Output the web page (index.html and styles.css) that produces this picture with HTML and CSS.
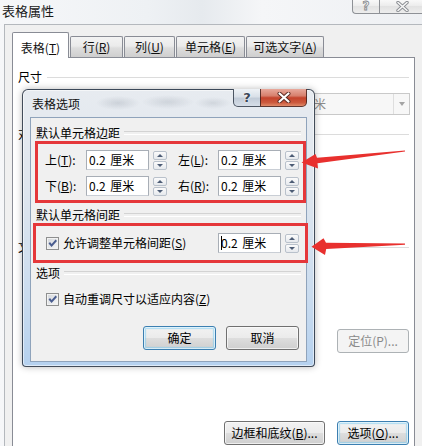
FILE: index.html
```html
<!DOCTYPE html>
<html lang="zh-CN">
<head>
<meta charset="utf-8">
<title>表格属性</title>
<link rel="stylesheet" href="styles.css">
</head>
<body>
<div class="window">
  <div class="titlebar">
    <span class="title">表格属性</span>
    <div class="caption">
      <span class="cap-btn cap-help">?</span>
      <span class="cap-btn cap-close">
        <svg width="13" height="11" viewBox="0 0 13 11"><path d="M2 1.5 L11 9.5 M11 1.5 L2 9.5" stroke="#8a8d92" stroke-width="3.4" stroke-linecap="round"/><path d="M2 1.5 L11 9.5 M11 1.5 L2 9.5" stroke="#f7f7f7" stroke-width="1.6" stroke-linecap="round"/></svg>
      </span>
    </div>
  </div>
  <div class="client">
    <div class="tabs">
      <div class="tab active">表格(<u>T</u>)</div>
      <div class="tab t-row">行(<u>R</u>)</div>
      <div class="tab t-col">列(<u>U</u>)</div>
      <div class="tab t-cell">单元格(<u>E</u>)</div>
      <div class="tab t-alt">可选文字(<u>A</u>)</div>
    </div>
    <div class="panel">
      <div class="group-h g-size"><span>尺寸</span></div>
      <div class="size-row">
        <div class="combo"><span class="combo-text">厘米</span><span class="combo-arrow"></span></div>
      </div>
      <div class="group-h g-align"><span>对</span></div>
      <div class="group-h g-wrap"><span>文</span></div>
      <div class="pos-row"><span class="btn disabled w72">定位(P)...</span></div>
      <div class="bottom-row">
        <span class="btn w101">边框和底纹(<u>B</u>)...</span>
        <span class="btn default w72">选项(<u>O</u>)...</span>
      </div>
    </div>
  </div>

  <div class="dialog">
    <div class="dlg-titlebar">
      <span class="dlg-title">表格选项</span>
      <div class="dlg-caption">
        <span class="dcap dcap-help">?</span>
        <span class="dcap dcap-close">
          <svg width="14" height="11" viewBox="0 0 14 11"><path d="M2.5 1.5 L11.5 9.5 M11.5 1.5 L2.5 9.5" stroke="#5a2a22" stroke-width="4" stroke-linecap="round"/><path d="M2.5 1.5 L11.5 9.5 M11.5 1.5 L2.5 9.5" stroke="#ffffff" stroke-width="2.2" stroke-linecap="round"/></svg>
        </span>
      </div>
    </div>
    <div class="dlg-client">
      <div class="group-h dg dg1"><span>默认单元格边距</span></div>
      <div class="mark mark-margins">
        <div class="m-row">
          <span class="lbl lbl-a">上(<u>T</u>):</span>
          <span class="field">0.2 厘米</span>
          <span class="spin"><span class="sp up"></span><span class="sp down"></span></span>
          <span class="lbl lbl-b">左(<u>L</u>):</span>
          <span class="field">0.2 厘米</span>
          <span class="spin"><span class="sp up"></span><span class="sp down"></span></span>
        </div>
        <div class="m-row">
          <span class="lbl lbl-a">下(<u>B</u>):</span>
          <span class="field">0.2 厘米</span>
          <span class="spin"><span class="sp up"></span><span class="sp down"></span></span>
          <span class="lbl lbl-b">右(<u>R</u>):</span>
          <span class="field">0.2 厘米</span>
          <span class="spin"><span class="sp up"></span><span class="sp down"></span></span>
        </div>
      </div>
      <div class="group-h dg dg2"><span>默认单元格间距</span></div>
      <div class="mark mark-spacing">
        <span class="check"><svg width="11" height="11" viewBox="0 0 11 11"><path d="M1.5 5.5 L3 4 L4.6 6 L8.6 1.6 L10 3 L4.6 9 Z" fill="#4a5d8f"/></svg></span>
        <span class="check-text">允许调整单元格间距(<u>S</u>)</span>
        <span class="field field-auto"><span class="caret"></span>0.2 厘米</span>
        <span class="spin"><span class="sp up"></span><span class="sp down"></span></span>
      </div>
      <div class="group-h dg dg3"><span>选项</span></div>
      <div class="auto-row">
        <span class="check"><svg width="11" height="11" viewBox="0 0 11 11"><path d="M1.5 5.5 L3 4 L4.6 6 L8.6 1.6 L10 3 L4.6 9 Z" fill="#4a5d8f"/></svg></span>
        <span class="check-text">自动重调尺寸以适应内容(<u>Z</u>)</span>
      </div>
      <div class="btn-row">
        <span class="btn default w73">确定</span>
        <span class="btn w73">取消</span>
      </div>
    </div>
  </div>

  <svg class="arrows" width="422" height="446" viewBox="0 0 422 446">
    <polygon points="405,150.4 317,157.8 315.5,154 301.5,162.5 318,168.5 317.5,163.2 405,151.6" fill="#e8302e"/>
    <polygon points="405,243.6 326,242.8 323.5,238.3 311.5,246.8 325,255 326.2,249 405,244.8" fill="#e8302e"/>
  </svg>
</div>
</body>
</html>
```

FILE: styles.css
```css
* { box-sizing: border-box; }
html, body { margin: 0; padding: 0; }
body {
  width: 422px;
  height: 446px;
  overflow: hidden;
  font-family: "Noto Sans CJK SC", "Microsoft YaHei", sans-serif;
  font-size: 12px;
  color: #000;
  background: #eef1f5;
}
u { text-decoration: underline; text-underline-offset: 1px; }

.window {
  position: relative;
  width: 422px;
  height: 446px;
  overflow: hidden;
  background: linear-gradient(90deg, #f6f7f9 0%, #eef1f4 35%, #e6eaee 48%, #f5f6f8 62%, #eef0f3 100%);
}

/* outer title bar */
.titlebar { height: 24px; display: flex; align-items: flex-start; }
.title { margin-left: 2px; font-size: 13px; line-height: 22px; color: #1a1a1a; }
.caption { margin-left: auto; margin-top: -1px; display: flex; margin-right: -3px; }
.cap-btn {
  height: 15px;
  display: flex; align-items: center; justify-content: center;
  border: 1px solid #8e9196; border-top: none;
  background: linear-gradient(#fbfbfb, #ececec 50%, #e2e2e2 51%, #ededed);
}
.cap-help {
  width: 27px; border-right: none; border-bottom-left-radius: 4px;
  font-family: "DejaVu Sans", sans-serif; font-weight: bold; font-size: 12px; line-height: 14px;
  color: #f4f4f4; -webkit-text-stroke: 0.8px #85888c;
}
.cap-close { width: 46px; }

/* outer client */
.client {
  margin-left: 4px;
  height: 422px;
  border-top: 1px solid #b4b8bd;
  border-left: 1px solid #b4b8bd;
  background: #f0f0f0;
  padding: 7px 0 0 7px;
}
.tabs { display: flex; align-items: flex-end; height: 25px; position: relative; z-index: 1; }
.tab {
  height: 21px;
  margin-left: 1px;
  border: 1px solid #898c95; border-bottom: none;
  border-radius: 2px 2px 0 0;
  background: linear-gradient(#f3f3f3, #ebebeb 45%, #dddddd 55%, #cfcfcf);
  text-align: center; line-height: 16px; padding-top: 2px;
  color: #111;
}
.tab.active {
  margin-left: 0;
  width: 57px; height: 26px; margin-bottom: -1px;
  background: #fff; padding-top: 7px;
}
.t-row { width: 53px; }
.t-col { width: 51px; }
.t-cell { width: 69px; }
.t-alt { width: 78px; }

.panel {
  width: 403px; height: 400px;
  border: 1px solid #898c95;
  background: #fff;
  padding: 0 5px;
  display: flex; flex-direction: column;
}
.group-h { display: flex; align-items: center; height: 16px; line-height: 16px; white-space: nowrap; }
.group-h::after { content: ""; flex: 1; height: 1px; background: #dcdcdc; margin-left: 5px; }
.g-size { margin-top: 11px; }
.size-row { margin-top: 8px; height: 22px; display: flex; justify-content: flex-end; margin-right: -1px; }
.combo {
  width: 150px; height: 22px;
  border: 1px solid #c9c9c9; background: #f7f7f7;
  display: flex; align-items: center; padding-left: 41px;
}
.combo-text { color: #8b8b8b; line-height: 16px; }
.combo-arrow {
  margin-left: auto; width: 16px; height: 20px;
  border-left: 1px solid #dedede;
  display: flex; align-items: center; justify-content: center;
}
.combo-arrow::after {
  content: ""; border-left: 3.5px solid transparent; border-right: 3.5px solid transparent;
  border-top: 4px solid #a4a4a4;
}
.g-align { margin-top: 11px; }
.g-wrap { margin-top: 97px; }
.pos-row { margin-top: 74px; display: flex; justify-content: flex-end; }
.bottom-row { margin-top: 68px; display: flex; justify-content: flex-end; gap: 12px; }

/* buttons */
.btn {
  display: inline-flex; align-items: center; justify-content: center;
  height: 24px;
  border: 1px solid #707070; border-radius: 3px;
  background: linear-gradient(#f2f2f2 0%, #ebebeb 48%, #dddddd 52%, #cfcfcf 100%);
  box-shadow: inset 0 0 0 1px rgba(252,252,252,0.7);
  line-height: 16px; color: #000; white-space: nowrap;
}
.btn.default {
  border-color: #3c7fb1;
  box-shadow: inset 0 0 0 1px rgba(255,255,255,0.6), inset 0 0 1px 2px rgba(120,205,245,0.55);
}
.btn.disabled { border-color: #adb2b5; background: #f4f4f4; color: #8a8a8a; box-shadow: none; }
.w72 { width: 72px; }
.w73 { width: 73px; }
.w101 { width: 101px; }

/* inner dialog (overlay) */
.dialog {
  position: absolute; left: 22px; top: 89px; z-index: 2;
  width: 293px; height: 278px;
  border: 1px solid rgba(38,48,62,0.85);
  border-radius: 6px 6px 4px 4px;
  background:
    radial-gradient(ellipse 22px 7px at 95px 13px, rgba(110,120,135,0.22), transparent),
    radial-gradient(ellipse 26px 7px at 145px 12px, rgba(110,120,135,0.2), transparent),
    radial-gradient(ellipse 18px 6px at 190px 13px, rgba(110,120,135,0.18), transparent),
    linear-gradient(180deg, #e7ebf0 0%, #dfe6ee 35%, #cadcef 75%, #b5d1ef 100%);
  box-shadow: inset 0 0 0 1px rgba(255,255,255,0.55), 0 0 7px rgba(0,0,0,0.28);
  display: flex; flex-direction: column;
}
.dlg-titlebar { height: 27px; display: flex; align-items: flex-start; }
.dlg-title { align-self: center; margin-left: 9px; line-height: 16px; color: #111; }
.dlg-caption { margin-left: auto; margin-right: 7px; margin-top: -1px; display: flex; }
.dcap { height: 18px; display: flex; align-items: center; justify-content: center; }
.dcap-help {
  width: 27px;
  border: 1px solid rgba(50,60,75,0.85); border-top: none; border-right: none;
  border-bottom-left-radius: 5px;
  background: linear-gradient(#eef2f6, #d9e0e8 45%, #c2ccd8 55%, #d6dee8);
  font-family: "DejaVu Sans", sans-serif; font-weight: bold; font-size: 13px; line-height: 16px;
  color: #3a4656; text-shadow: 0 0 2px #fff, 0 0 1px #fff;
}
.dcap-close {
  width: 47px;
  border: 1px solid rgba(70,35,30,0.85); border-top: none;
  border-bottom-right-radius: 5px;
  background: linear-gradient(#e8a99c, #d7806d 40%, #c4432c 52%, #cc5a3e 80%, #e08b6a);
}
.dlg-client {
  margin: 0 7px;
  height: 245px;
  background: #f0f0f0;
  border: 1px solid #8fa3bb;
  display: flex; flex-direction: column;
}
.dg { padding-left: 5px; padding-right: 5px; }
.dg::after { height: 2px; background: none; border-top: 1px solid #d3d3d3; border-bottom: 1px solid #fff; margin-left: 4px; }
.dg1 { margin-top: 7px; }
.dg2 { margin-top: 4px; }
.dg3 { margin-top: 2px; }

.mark { border: 3px solid #e5373a; }
.mark-margins {
  margin-left: 4px;
  padding: 6px 0 4px 7px;
  display: flex; flex-direction: column; gap: 6px;
}
.m-row { display: flex; align-items: center; height: 20px; }
.lbl { line-height: 16px; white-space: nowrap; }
.lbl-a { width: 41px; }
.lbl-b { width: 40px; margin-left: 11px; }
.field {
  width: 63px; height: 20px;
  border: 1px solid #a8aeb6; border-bottom-color: #c9ced5;
  background: #fff;
  padding-left: 2px; line-height: 18px; white-space: pre;
  word-spacing: 2px;
  display: flex; align-items: center;
}
.spin { width: 14px; height: 19px; margin-left: 4px; display: flex; flex-direction: column; gap: 1px; }
.sp {
  flex: 1;
  border: 1px solid #b9c1cb; border-radius: 2px;
  background: linear-gradient(#fbfbfb, #e6e9ed);
  display: flex; align-items: center; justify-content: center;
}
.sp.up::after { content: ""; border-left: 3px solid transparent; border-right: 3px solid transparent; border-bottom: 3px solid #4d5c75; }
.sp.down::after { content: ""; border-left: 3px solid transparent; border-right: 3px solid transparent; border-top: 3px solid #4d5c75; }

.mark-spacing {
  margin-left: 2px; margin-right: -2px;
  height: 40px;
  padding: 0 6px 0 10px;
  display: flex; align-items: center;
}
.check {
  width: 13px; height: 13px; flex: none;
  border: 1px solid #8e8f8f;
  background: linear-gradient(135deg, #d3d6db, #f7f7f7);
  box-shadow: inset 0 0 0 1px #f2f2f2;
  display: flex; align-items: center; justify-content: center;
}
.check-text { margin-left: 4px; line-height: 16px; white-space: nowrap; }
.field-auto { margin-left: auto; padding-left: 2px; }
.caret { display: inline-block; width: 1px; height: 14px; background: #000; margin-right: -1px; }

.auto-row { margin-top: 8px; height: 20px; display: flex; align-items: center; padding-left: 15px; }
.btn-row { margin-top: 17px; display: flex; justify-content: flex-end; gap: 10px; padding-right: 7px; }

.arrows { position: absolute; left: 0; top: 0; z-index: 3; pointer-events: none; }
```
